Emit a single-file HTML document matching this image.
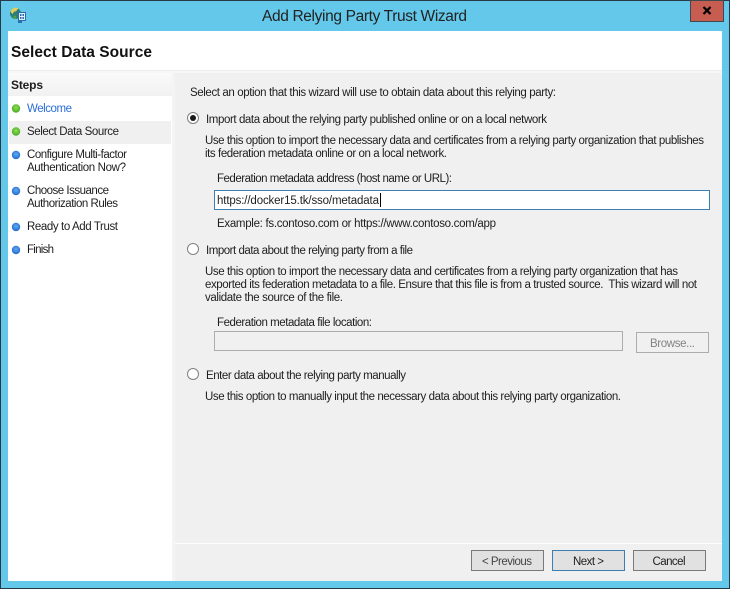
<!DOCTYPE html>
<html><head><meta charset="utf-8"><title>Add Relying Party Trust Wizard</title>
<style>
html,body{margin:0;padding:0;background:#63c8ea}
svg{display:block}
text{font-family:"Liberation Sans",sans-serif;font-size:11.5px;fill:#1e1e1e}
.b{font-weight:bold}
</style></head><body>
<svg width="730" height="589" viewBox="0 0 730 589" xmlns="http://www.w3.org/2000/svg">
<defs><linearGradient id="st" x1="0" y1="0" x2="0" y2="1"><stop offset="0" stop-color="#fafafa"/><stop offset="1" stop-color="#f1f1f1"/></linearGradient>
<radialGradient id="g" cx=".5" cy=".4" r=".6"><stop offset="0" stop-color="#92e04c"/><stop offset="1" stop-color="#45a82a"/></radialGradient>
<radialGradient id="bl" cx=".5" cy=".4" r=".6"><stop offset="0" stop-color="#62aaf2"/><stop offset="1" stop-color="#1f68cc"/></radialGradient></defs>
<rect x="0.5" y="0.5" width="729" height="588" fill="#63c8ea" stroke="#263b47"/>
<!-- icon -->
<circle cx="15.500" cy="13.500" r="5.500" fill="#2f7d78"/>
<path d="M10.500 11.500a5.500 5.500 0 0 1 8-3.200l-2.500 3-2 .5-1.500 2.500z" fill="#e0cf5a"/>
<path d="M13 18.500l1-3 2 .5.500 3z" fill="#4fa04a"/>
<rect x="18.500" y="12.500" width="7" height="8" fill="#e3f0f8" stroke="#2c6cb0"/>
<rect x="20" y="14" width="1.500" height="2" fill="#2c6cb0"/><rect x="22.500" y="14" width="1.500" height="2" fill="#2c6cb0"/>
<rect x="20" y="17" width="1.500" height="2" fill="#2c6cb0"/><rect x="22.500" y="17" width="1.500" height="2" fill="#2c6cb0"/>
<rect x="18" y="20.500" width="4" height="2.500" fill="#2c6cb0"/>
<!-- close -->
<rect x="690.500" y="0.500" width="33" height="21" fill="#c75c50" stroke="#3d4a50"/>
<path d="M703.500 7l7 7M710.500 7l-7 7" stroke="#000" stroke-width="2.200"/>
<text x="262" y="21" textLength="205" style="font-size:15.5px;fill:#222">Add Relying Party Trust Wizard</text>
<!-- client -->
<rect x="8" y="31" width="714" height="550" fill="#fff"/>
<rect x="8" y="70" width="714" height="1" fill="#ececec"/>
<rect x="8" y="71" width="714" height="2" fill="#f7f7f7"/>
<rect x="172" y="73" width="3" height="508" fill="#f4f4f4"/>
<rect x="175" y="73" width="547" height="508" fill="#f0f0f0"/>
<rect x="175" y="543" width="547" height="1" fill="#fdfdfd"/>
<rect x="8" y="73" width="164" height="23" fill="url(#st)"/>
<rect x="9" y="121" width="162" height="23" fill="#f0f0f0"/>
<text class="b" x="11" y="57" textLength="141" style="font-size:15.5px;fill:#111">Select Data Source</text>
<text class="b" x="11" y="89" textLength="32" style="font-size:12px">Steps</text>
<!-- steps -->
<circle cx="16" cy="108.500" r="4.200" fill="url(#g)"/>
<circle cx="16" cy="131.500" r="4.200" fill="url(#g)"/>
<circle cx="16" cy="155" r="4.200" fill="url(#bl)"/>
<circle cx="16" cy="191" r="4.200" fill="url(#bl)"/>
<circle cx="16" cy="227" r="4.200" fill="url(#bl)"/>
<circle cx="16" cy="250" r="4.200" fill="url(#bl)"/>
<text x="27" y="112" textLength="45" style="fill:#2a6fd6">Welcome</text>
<text x="27" y="135" textLength="92">Select Data Source</text>
<text x="27" y="158" textLength="100">Configure Multi-factor</text>
<text x="27" y="171" textLength="99">Authentication Now?</text>
<text x="27" y="194" textLength="82">Choose Issuance</text>
<text x="27" y="207" textLength="91">Authorization Rules</text>
<text x="27" y="230" textLength="91">Ready to Add Trust</text>
<text x="27" y="253" textLength="27">Finish</text>
<!-- right -->
<text x="190" y="96" textLength="366">Select an option that this wizard will use to obtain data about this relying party:</text>
<circle cx="193" cy="118" r="5.500" fill="#fff" stroke="#808080"/><circle cx="193" cy="118" r="3" fill="#1a1a1a"/>
<text x="206" y="123" textLength="341">Import data about the relying party published online or on a local network</text>
<text x="205" y="144" textLength="499">Use this option to import the necessary data and certificates from a relying party organization that publishes</text>
<text x="205" y="157" textLength="242">its federation metadata online or on a local network.</text>
<text x="217" y="182" textLength="235">Federation metadata address (host name or URL):</text>
<rect x="214.500" y="190.500" width="495" height="19" fill="#fff" stroke="#3c7fb1"/>
<text x="217" y="204" textLength="162">https://docker15.tk/sso/metadata</text>
<rect x="380" y="193" width="1" height="14" fill="#000"/>
<text x="217" y="227" textLength="279">Example: fs.contoso.com or https://www.contoso.com/app</text>
<circle cx="193" cy="249" r="5.500" fill="#fff" stroke="#808080"/>
<text x="206" y="254" textLength="207">Import data about the relying party from a file</text>
<text x="205" y="275" textLength="473">Use this option to import the necessary data and certificates from a relying party organization that has</text>
<text x="205" y="288" textLength="492" xml:space="preserve">exported its federation metadata to a file. Ensure that this file is from a trusted source.  This wizard will not</text>
<text x="205" y="301" textLength="138">validate the source of the file.</text>
<text x="217" y="326" textLength="155">Federation metadata file location:</text>
<rect x="214.500" y="331.500" width="408" height="19" fill="#f0f0f0" stroke="#adadad"/>
<rect x="636.500" y="332.500" width="72" height="20" fill="#f0f0f0" stroke="#adadad"/>
<text x="650" y="347" textLength="45" style="fill:#838383">Browse...</text>
<circle cx="193" cy="374" r="5.500" fill="#fff" stroke="#808080"/>
<text x="206" y="379" textLength="200">Enter data about the relying party manually</text>
<text x="205" y="400" textLength="416">Use this option to manually input the necessary data about this relying party organization.</text>
<!-- buttons -->
<rect x="471.500" y="550.500" width="72" height="20" fill="#e1e1e1" stroke="#7a7a7a"/>
<text x="482" y="565" textLength="50" style="fill:#444">&lt; Previous</text>
<rect x="552.500" y="550.500" width="72" height="20" fill="#e1e1e1" stroke="#3c7fb1"/>
<text x="573" y="565" textLength="31">Next &gt;</text>
<rect x="633.500" y="550.500" width="72" height="20" fill="#e1e1e1" stroke="#7a7a7a"/>
<text x="652.500" y="565" textLength="33">Cancel</text>
</svg>
</body></html>
